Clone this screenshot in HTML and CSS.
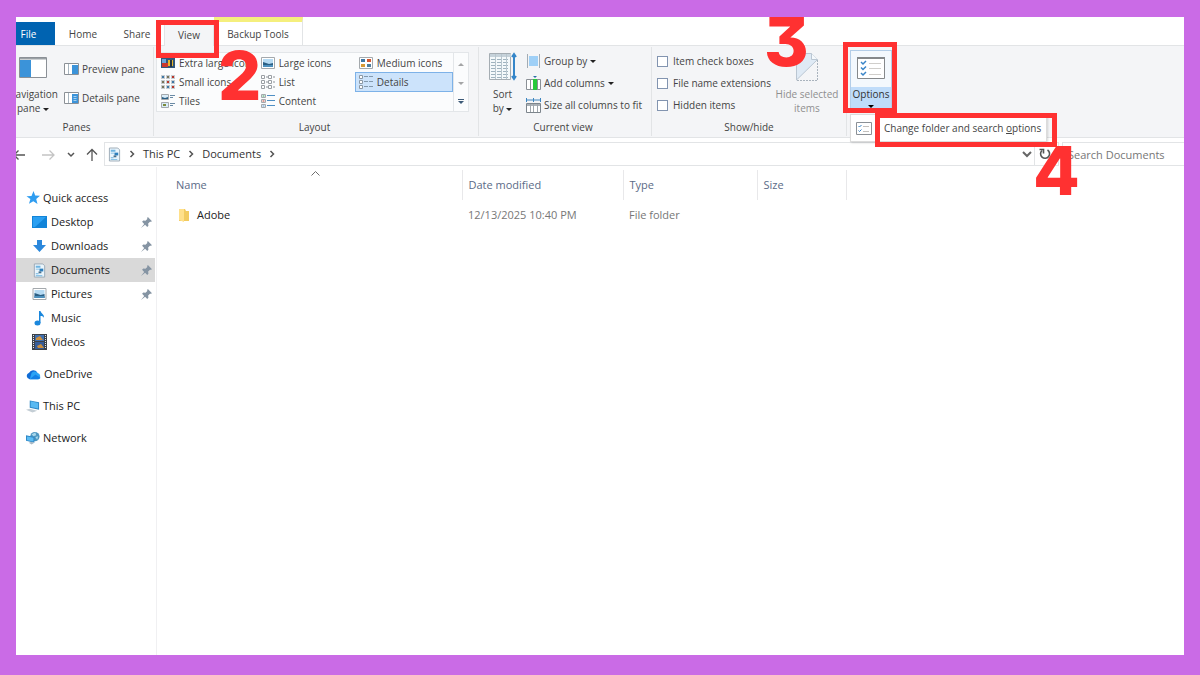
FILE: index.html
```html
<!DOCTYPE html>
<html lang="en">
  <head>
    <meta charset="UTF-8" />
    <meta name="viewport" content="width=device-width, initial-scale=1.0" />
    <title>Documents</title>
    <link rel="stylesheet" href="styles.css">
  </head>
  <body>
    <!-- Shared icons -->
    <svg class="sprite" aria-hidden="true">
      <symbol id="i-doc" viewBox="0 0 14 16">
        <path d="M1.500 1h9l2 2v12h-11z" fill="#eaf5fc" stroke="#9aa9b4" />
        <path d="M3 3h5v2H3zM3 6h4v1H3zM3 11h3v1H3zM3 13h7v1H3z" fill="#6fb4e0" />
        <path d="M7 6h4v3H7z" fill="#2d7fbd" />
        <path d="M6 9h3v2H6z" fill="#4b6f8a" />
      </symbol>
      <symbol id="i-pin" viewBox="0 0 12 12">
        <path d="M7.500 0L12 4.500l-1.200.8-1-.2-2 2 .3 2.400L6.800 10.800 4.500 8.500 0 12l3.500-4.500L1.200 5.200l1.300-1.300 2.400.3 2-2-.2-1z" fill="#8594a3" />
      </symbol>
      <symbol id="i-photo" viewBox="0 0 14 12">
        <path d="M.5.500h13v11H.500z" fill="#fff" stroke="#a4a9ad" />
        <path d="M2 2h10v8H2z" fill="#b5daf3" />
        <path d="M2 5l3 1 3 1 4-1v4H2z" fill="#2b5f84" />
        <path d="M2 8h10v2H2z" fill="#4d90bd" />
      </symbol>
      <symbol id="i-chev" viewBox="0 0 8 8">
        <path d="M2.500 1l3 3-3 3" fill="none" stroke="#555" stroke-width="1.500" />
      </symbol>
    </svg>

    <div class="window">
      <div class="title-strip"></div>

      <nav class="tabs">
        <button class="tab file">File</button>
        <button class="tab">Home</button>
        <button class="tab">Share</button>
        <div class="tab-wrap">
          <button class="tab active">View</button>
          <span class="mark mark-view"></span>
          <span class="step step-2">2</span>
        </div>
        <button class="tab backup">Backup Tools</button>
      </nav>

      <div class="ribbon">
        <section class="group panes">
          <div class="group-body">
            <button class="big">
              <svg width="28" height="21" viewBox="0 0 28 21">
                <path d="M.5.500h27v20H.500z" fill="#fff" stroke="#8b9096" />
                <path d="M1 1h26v1.500H1z" fill="#9aa0a5" />
                <path d="M1 3h11v17H1z" fill="#3b93d9" />
              </svg>
              <span>Navigation</span>
              <span>pane <i class="caret"></i></span>
            </button>
            <div class="stack roomy">
              <button class="cmd">
                <svg width="15" height="12" viewBox="0 0 15 12">
                  <path d="M.5.500h14v11H.500z" fill="#fff" stroke="#8b9096" />
                  <path d="M4.500 1v10" stroke="#a9b6c0" />
                  <path d="M8 2h6v9H8z" fill="#3b93d9" />
                </svg>
                Preview pane
              </button>
              <button class="cmd">
                <svg width="15" height="12" viewBox="0 0 15 12">
                  <path d="M.5.500h14v11H.500z" fill="#fff" stroke="#8b9096" />
                  <path d="M4.500 1v10" stroke="#a9b6c0" />
                  <path d="M8 2h6v9H8z" fill="#3b93d9" />
                  <path d="M9.500 4.500h3M9.500 6.500h3M9.500 8.500h3" stroke="#a8d0ef" />
                </svg>
                Details pane
              </button>
            </div>
          </div>
          <h2>Panes</h2>
        </section>

        <section class="group layout">
          <div class="group-body">
            <div class="gallery">
              <div class="views">
                <button class="view">
                  <svg width="14" height="12" viewBox="0 0 14 12">
                    <path d="M0 1h14v10H0z" fill="#31567a" />
                    <path d="M1 2h4v4H1z" fill="#6ca6d8" />
                    <path d="M1 6h6v4H1z" fill="#c9372c" />
                    <path d="M7 3h5v6H7z" fill="#e8b62d" />
                    <path d="M9 3h2v7H9z" fill="#27343e" />
                  </svg>
                  Extra large icons
                </button>
                <button class="view">
                  <svg width="14" height="12"><use href="#i-photo" /></svg>
                  Large icons
                </button>
                <button class="view">
                  <svg width="14" height="12" viewBox="0 0 14 12">
                    <path d="M.5.500h13v11H.500z" fill="#fff" stroke="#a4a9ad" />
                    <path d="M2 2h4v3H2z" fill="#3f78a5" />
                    <path d="M8 2h4v3H8z" fill="#d4562f" />
                    <path d="M2 7h4v3H2z" fill="#d89a35" />
                    <path d="M8 7h4v3H8z" fill="#4f7f9f" />
                  </svg>
                  Medium icons
                </button>
                <button class="view">
                  <svg width="14" height="14" viewBox="0 0 14 14">
                    <path d="M0 0h4v4H0zM5 0h4v4H5zM10 0h4v4h-4zM0 5h4v4H0zM5 5h4v4H5zM10 5h4v4h-4zM0 10h4v4H0zM5 10h4v4H5zM10 10h4v4h-4z" fill="#c7cdd2" />
                    <path d="M1 1h2v2H1zM11 6h2v2h-2zM6 11h2v2H6z" fill="#3f78a5" />
                    <path d="M11 1h2v2h-2zM6 6h2v2H6zM11 11h2v2h-2z" fill="#b8382c" />
                    <path d="M6 1h2v2H6zM1 6h2v2H1zM1 11h2v2H1z" fill="#77745c" />
                  </svg>
                  Small icons
                </button>
                <button class="view">
                  <svg width="14" height="14" viewBox="0 0 14 14">
                    <path d="M.5.500h3v3h-3zM.5 5.500h3v3h-3zM.5 10.500h3v3h-3zM7.500.500h3v3h-3zM7.500 5.500h3v3h-3zM7.500 10.500h3v3h-3z" fill="#fff" stroke="#9a9fa4" />
                    <path d="M5 2h2M5 7h2M5 12h2M12 2h2M12 7h2M12 12h2" stroke="#8b9096" />
                  </svg>
                  List
                </button>
                <button class="view selected">
                  <svg width="14" height="14" viewBox="0 0 14 14">
                    <path d="M.5.500h3v3h-3zM.5 5.500h3v3h-3zM.5 10.500h3v3h-3z" fill="#fff" stroke="#8b98a5" />
                    <path d="M5 1.500h4M5 6.500h4M5 11.500h4M10 1.500h4M10 6.500h4M10 11.500h4" stroke="#8299ad" />
                  </svg>
                  Details
                </button>
                <button class="view">
                  <svg width="14" height="14" viewBox="0 0 14 14">
                    <path d="M.5.500h7v5h-7zM.5 8.500h7v5h-7z" fill="#d9ecf8" stroke="#a4a9ad" />
                    <path d="M1 3l3 1 3-1v2H1z" fill="#2b5f84" />
                    <path d="M2 10h3v2H2z" fill="#7c8a3a" />
                    <path d="M9 1.500h5M9 3.500h3M9 9.500h5M9 11.500h3" stroke="#6a8aa5" />
                  </svg>
                  Tiles
                </button>
                <button class="view">
                  <svg width="14" height="14" viewBox="0 0 14 14">
                    <path d="M.5.500h4v3h-4zM.5 5.500h4v3h-4zM.5 10.500h4v3h-4z" fill="#fff" stroke="#a4a9ad" />
                    <path d="M1.500 2h2" stroke="#2f9658" />
                    <path d="M1.500 7h2" stroke="#b8382c" />
                    <path d="M1.500 12h2M6 1.500h8M6 6.500h8M6 11.500h8" stroke="#4f8fc4" />
                  </svg>
                  Content
                </button>
              </div>
              <div class="scroller">
                <button aria-label="Scroll up"><i class="caret up faint"></i></button>
                <button aria-label="Scroll down"><i class="caret faint"></i></button>
                <button aria-label="More"><i class="caret more"></i></button>
              </div>
            </div>
          </div>
          <h2>Layout</h2>
        </section>

        <section class="group current">
          <div class="group-body">
            <button class="big sort">
              <svg width="28" height="30" viewBox="0 0 28 30">
                <path d="M.5 1.500h21v26H.500z" fill="#f4f9fb" stroke="#a5adb3" />
                <path d="M1 2h21v3H1z" fill="#c6d2da" />
                <path d="M2 7.500h18M2 10.500h18M2 13.500h18M2 16.500h18M2 19.500h18M2 22.500h18M2 25.500h18" stroke="#9fb3bf" stroke-dasharray="5 1" />
                <path d="M6.500 2v25M12.500 2v25M17.500 2v25" stroke="#b8c6ce" />
                <path d="M25 2v25M23 5l2-3 2 3M23 24l2 3 2-3" fill="none" stroke="#3586c9" stroke-width="2" />
              </svg>
              <span>Sort</span>
              <span>by <i class="caret"></i></span>
            </button>
            <div class="stack">
              <button class="cmd">
                <svg width="15" height="14" viewBox="0 0 15 14">
                  <path d="M3 2h9v10H3z" fill="#9fd0f7" />
                  <path d="M1.500 0v14M13.500 0v14" stroke="#a3acb4" />
                </svg>
                Group by <i class="caret"></i>
              </button>
              <button class="cmd">
                <svg width="15" height="14" viewBox="0 0 15 14">
                  <path d="M.5 3.500h14v10H.500z" fill="#fff" stroke="#8b9096" />
                  <path d="M4.500 4v9M11.500 4v9" stroke="#8b9096" />
                  <path d="M7 3h4v11H7z" fill="#27c93a" />
                  <path d="M7 0h4L9 2z" fill="#2d6fa5" />
                </svg>
                Add columns <i class="caret"></i>
              </button>
              <button class="cmd">
                <svg width="15" height="15" viewBox="0 0 15 15">
                  <path d="M.5 0v4M14.500 0v4M7.500 0v4M1 2h13" stroke="#3e86c0" />
                  <path d="M.5 5.500h14v9H.500z" fill="#fff" stroke="#7d858c" />
                  <path d="M1 6h13v2H1z" fill="#aab1b7" />
                  <path d="M4.500 6v8M7.500 6v8M11.500 6v8" stroke="#a0a7ad" />
                </svg>
                Size all columns to fit
              </button>
            </div>
          </div>
          <h2>Current view</h2>
        </section>

        <section class="group showhide">
          <div class="group-body">
            <div class="stack">
              <label class="check"><input type="checkbox" /> Item check boxes</label>
              <label class="check"><input type="checkbox" /> File name extensions</label>
              <label class="check"><input type="checkbox" /> Hidden items</label>
            </div>
            <button class="big hide" disabled>
              <svg width="22" height="30" viewBox="0 0 22 30">
                <path d="M.5 28V1.500h15l6 6z" fill="#dfeaf5" stroke="#bac6d2" />
                <path d="M15.500 1.500v6h6" fill="#f5f9fc" stroke="#bac6d2" />
                <path d="M21.500 8v20.500H1" fill="none" stroke="#a9b3bd" stroke-dasharray="2 1" />
              </svg>
              <span>Hide selected</span>
              <span>items</span>
            </button>
            <span class="step step-3">3</span>
          </div>
          <h2>Show/hide</h2>
        </section>

        <section class="options-group">
          <button class="options">
            <span class="options-icon">
              <svg width="28" height="22" viewBox="0 0 28 22">
                <path d="M.5.500h27v21H.500z" fill="#fff" stroke="#85888b" />
                <path d="M0 0h28v2H0z" fill="#85888b" />
                <path d="M4 5l2 2 3-3M4 10.500l2 2 3-3M4 16l2 2 3-3" fill="none" stroke="#3a85c8" stroke-width="1.500" />
                <path d="M12 6.500h12M12 11.500h12M12 17.500h12" stroke="#d0cecb" />
              </svg>
            </span>
            <span class="options-label">Options<i class="caret"></i></span>
          </button>
          <div class="menu">
            <a href="#options">
              <svg width="16" height="13" viewBox="0 0 16 13">
                <path d="M.5.500h15v12H.500z" fill="#fff" stroke="#8b9096" />
                <path d="M2.500 4l1 1 2-2M2.500 8.500l1 1 2-2" fill="none" stroke="#3a85c8" />
                <path d="M7 4.500h6M7 9.500h6" stroke="#c3c0bd" />
              </svg>
              <span>Change folder and search <u>o</u>ptions</span>
            </a>
            <span class="mark mark-menu"></span>
            <span class="step step-4">4</span>
          </div>
          <span class="mark mark-options"></span>
        </section>
      </div>

      <div class="address-row">
        <div class="history">
          <button aria-label="Back">
            <svg width="13" height="12" viewBox="0 0 13 12"><path d="M13 6H2M6.500 1.500L2 6l4.500 4.500" fill="none" stroke="#555" stroke-width="1.300" /></svg>
          </button>
          <button aria-label="Forward">
            <svg width="13" height="12" viewBox="0 0 13 12"><path d="M0 6h12M7.500 1.500L12 6l-4.500 4.500" fill="none" stroke="#c4c4c4" stroke-width="1.300" /></svg>
          </button>
          <button aria-label="Recent locations">
            <svg width="8" height="6" viewBox="0 0 8 6"><path d="M1 1l3 3 3-3" fill="none" stroke="#555" stroke-width="1.500" /></svg>
          </button>
          <button aria-label="Up">
            <svg width="12" height="13" viewBox="0 0 12 13"><path d="M6 13V1.500M1 6.500l5-5 5 5" fill="none" stroke="#555" stroke-width="1.300" /></svg>
          </button>
        </div>
        <div class="address">
          <svg width="13" height="15"><use href="#i-doc" /></svg>
          <svg width="8" height="8"><use href="#i-chev" /></svg>
          <a href="#pc">This PC</a>
          <svg width="8" height="8"><use href="#i-chev" /></svg>
          <a href="#documents">Documents</a>
          <svg width="8" height="8"><use href="#i-chev" /></svg>
          <button class="drop" aria-label="Previous locations">
            <svg width="10" height="7" viewBox="0 0 10 7"><path d="M1 1l4 4 4-4" fill="none" stroke="#666" stroke-width="2" /></svg>
          </button>
          <button class="refresh" aria-label="Refresh">
            <svg width="12" height="12" viewBox="0 0 12 12">
              <path d="M8.500 2A4.500 4.500 0 1 1 3 2.500" fill="none" stroke="#555" stroke-width="1.600" />
              <path d="M.5 1.500H4.500V5.500" fill="none" stroke="#555" stroke-width="1.600" />
            </svg>
          </button>
        </div>
        <input class="search" type="text" placeholder="Search Documents" aria-label="Search Documents" />
      </div>

      <div class="content">
        <nav class="sidebar">
          <a class="root" href="#quick">
            <svg width="14" height="14" viewBox="0 0 14 14"><path d="M7.500 0l1.700 4.600 4.800.200-3.800 3.100L11.500 13 7.300 10.200 3 12.800l1.400-4.900L.5 5.200l5-.300z" fill="#2f9df0" /></svg>
            Quick access
          </a>
          <a href="#desktop">
            <svg width="15" height="12" viewBox="0 0 15 12"><path d="M0 0h15v12H0z" fill="#1284d8" /><path d="M1 1h13L3 11H1z" fill="#2ba0f2" /></svg>
            Desktop
            <svg class="pin" width="11" height="11"><use href="#i-pin" /></svg>
          </a>
          <a href="#downloads">
            <svg width="15" height="14" viewBox="0 0 15 14"><path d="M5 1h5v5h4l-6.500 7L1 6h4z" fill="#2b88dc" /></svg>
            Downloads
            <svg class="pin" width="11" height="11"><use href="#i-pin" /></svg>
          </a>
          <a class="current-folder" href="#documents">
            <svg width="15" height="15"><use href="#i-doc" /></svg>
            Documents
            <svg class="pin" width="11" height="11"><use href="#i-pin" /></svg>
          </a>
          <a href="#pictures">
            <svg width="15" height="12"><use href="#i-photo" /></svg>
            Pictures
            <svg class="pin" width="11" height="11"><use href="#i-pin" /></svg>
          </a>
          <a href="#music">
            <svg width="15" height="15" viewBox="0 0 15 15">
              <path d="M7 0h1.500c.3 2.500 4 3 3.500 7-.5-1.500-1.500-2-3.500-2v7H7z" fill="#1b87dc" />
              <ellipse cx="5.500" cy="12" rx="3" ry="2.500" fill="#1b87dc" />
            </svg>
            Music
          </a>
          <a href="#videos">
            <svg width="15" height="16" viewBox="0 0 15 16">
              <path d="M0 0h15v16H0z" fill="#3c4248" />
              <path d="M3 1h9v6H3z" fill="#3f6fb0" />
              <path d="M3 8h9v7H3z" fill="#355c99" />
              <path d="M4 4l4-2 3 4H4zM5 12l4-2 3 4H6z" fill="#cc8f3c" />
              <path d="M1.500 1v14M13.500 1v14" stroke="#e4e8eb" stroke-dasharray="1 1" />
            </svg>
            Videos
          </a>
          <a class="root spaced" href="#onedrive">
            <svg width="15" height="11" viewBox="0 0 16 11">
              <path d="M4 10.500a3.600 3.600 0 0 1-.7-7A5.200 5.200 0 0 1 12 3l-2 5z" fill="#0f6cd6" />
              <path d="M6 3.500A4.500 4.500 0 0 1 12.500 4 3.400 3.400 0 0 1 13 10.500H4z" fill="#2aa3f5" />
              <path d="M4 10.500l6-5 5.500 3.500a2.500 2.500 0 0 1-2.500 1.500z" fill="#1380e6" />
            </svg>
            OneDrive
          </a>
          <a class="root spaced" href="#pc">
            <svg width="14" height="14" viewBox="0 0 15 14">
              <path d="M4 1l10 2v8L4 9z" fill="#2d86c4" />
              <path d="M5 2l8 1.700v6L5 8z" fill="#58b9f2" />
              <path d="M0 11l4-1 8 2-5 2z" fill="#c4ced5" />
            </svg>
            This PC
          </a>
          <a class="root spaced" href="#network">
            <svg width="14" height="14" viewBox="0 0 15 14">
              <circle cx="9.500" cy="5.500" r="5" fill="#4d96c0" />
              <path d="M6 3l4-2 1 3-3 1zM10 6l3-1-1 4z" fill="#a8d7eb" />
              <path d="M0 4l9 2v6L0 10z" fill="#2d86c4" />
              <path d="M1 5.300l7 1.500v4L1 9.300z" fill="#5cbcf3" />
              <path d="M3 12l3-1 3 1-3 2z" fill="#a9b9c5" />
            </svg>
            Network
          </a>
        </nav>

        <main class="files">
          <svg class="sort-arrow" width="9" height="5" viewBox="0 0 9 5"><path d="M.5 4.500l4-4 4 4" fill="none" stroke="#6d6d6d" /></svg>
          <table>
            <thead>
              <tr>
                <th class="name">Name</th>
                <th class="date">Date modified</th>
                <th class="type">Type</th>
                <th class="size">Size</th>
                <td></td>
              </tr>
            </thead>
            <tbody>
              <tr>
                <td class="name">
                  <a href="#adobe">
                    <svg width="10" height="13" viewBox="0 0 10 13">
                      <path d="M0 0h6l1 2h3v10H0z" fill="#f2cb60" />
                      <path d="M0 0h5v13L0 11z" fill="#ffe08a" />
                    </svg>
                    Adobe
                  </a>
                </td>
                <td>12/13/2025 10:40 PM</td>
                <td>File folder</td>
                <td></td>
                <td></td>
              </tr>
            </tbody>
          </table>
        </main>
      </div>
    </div>
  </body>
</html>
```
FILE: styles.css
```css
:root {
  --frame: #ca6be6;
  --ribbon: #f4f5f7;
  --line: #e2e4e6;
  --text: #444;
  --mark: #ff3131;
}

* {
  box-sizing: border-box;
}

body {
  margin: 0;
  min-height: 100vh;
  padding: 17px 16px 20px;
  display: flex;
  background: var(--frame);
  color: var(--text);
  font-family: "Open Sans", "Noto Sans", sans-serif;
  font-size: 11px;
  line-height: 14px;
}

button,
input {
  font: inherit;
  color: inherit;
}

button {
  margin: 0;
  padding: 0;
  border: 0;
  background: none;
  white-space: nowrap;
}

a {
  color: inherit;
  text-decoration: none;
}

svg {
  display: block;
  flex: none;
}

.sprite {
  position: absolute;
  width: 0;
  height: 0;
}

.window {
  flex: 1;
  min-width: 0;
  display: flex;
  flex-direction: column;
  background: #fff;
  overflow: hidden;
}

.title-strip {
  height: 5px;
}

/* Tabs */
.tabs {
  display: flex;
  height: 23px;
  font-size: 10px;
}

.tab {
  width: 54px;
  height: 23px;
}

.tab.file {
  width: 39px;
  margin-right: 1px;
  padding-right: 14px;
  background: #0063b1;
  color: #fff;
}

.tab-wrap {
  position: relative;
  z-index: 3;
}

.tab.active {
  width: 50px;
  height: 24px;
  background: var(--ribbon);
  border: 1px solid var(--line);
  border-bottom: 0;
}

.tab.backup {
  width: 89px;
  height: 28px;
  margin-top: -5px;
  border-top: 5px solid #f5ef7d;
  border-right: 1px solid var(--line);
}

/* Ribbon */
.ribbon {
  display: flex;
  height: 93px;
  margin-left: -16px;
  padding: 1px 0;
  background: var(--ribbon);
  border-top: 1px solid var(--line);
  border-bottom: 1px solid var(--line);
}

.group {
  display: flex;
  flex-direction: column;
  border-right: 1px solid var(--line);
}

.group-body {
  position: relative;
  flex: 1;
  display: flex;
}

.group h2 {
  margin: 0;
  height: 18px;
  font-size: 10px;
  font-weight: 400;
  line-height: 18px;
  text-align: center;
}

.panes {
  width: 154px;
  padding-left: 8px;
  padding-right: 8px;
}

.layout {
  width: 325px;
  padding-right: 5px;
  padding-left: 2px;
}

.current {
  width: 173px;
  padding-right: 4px;
}

.showhide {
  width: 195px;
}

.big {
  display: flex;
  flex-direction: column;
  align-items: center;
  width: 50px;
  padding-top: 5px;
  font-size: 10px;
}

.big svg {
  margin-bottom: 5px;
}

.panes .big svg {
  margin-top: 5px;
  margin-bottom: 9px;
}

.sort {
  width: 47px;
}

.hide {
  width: 72px;
  color: #8f8f8f;
}

.stack {
  display: flex;
  flex-direction: column;
  padding-top: 3px;
}

.cmd,
.check {
  display: flex;
  align-items: center;
  gap: 3px;
  height: 22px;
  font-size: 10px;
}

.roomy {
  padding: 7px 0 0 6px;
}

.roomy .cmd {
  height: 29px;
}

.check {
  gap: 5px;
  padding-left: 5px;
}

.check input {
  appearance: none;
  width: 11px;
  height: 11px;
  margin: 0;
  background: #fff;
  border: 1px solid #8294b0;
}

.caret {
  display: inline-block;
  vertical-align: middle;
  border: 3px solid transparent;
  border-top-color: #222;
  border-bottom-width: 0;
}

.caret.up {
  border-top-width: 0;
  border-bottom: 3px solid #222;
}

.caret.faint {
  opacity: 0.4;
}

.caret.more {
  position: relative;
  border-top-color: #3d5a78;
}

.caret.more::before {
  content: "";
  position: absolute;
  top: -5px;
  left: -3px;
  width: 6px;
  height: 1px;
  background: #3d5a78;
}

.gallery {
  display: flex;
  width: 313px;
  height: 60px;
  margin-top: 5px;
  background: #fbfcfd;
  border: 1px solid #e3e6e9;
}

.views {
  flex: 1;
  display: grid;
  grid-template-columns: repeat(3, 1fr);
  grid-template-rows: repeat(3, 1fr);
}

.view {
  display: flex;
  align-items: center;
  gap: 4px;
  padding-left: 3px;
  font-size: 10px;
  border: 1px solid transparent;
}

.view.selected {
  background: #cce3fb;
  border-color: #7db2e8;
}

.scroller {
  width: 15px;
  display: grid;
  grid-template-rows: repeat(3, 1fr);
  border-left: 1px solid #e3e6e9;
  line-height: 1;
}

/* Options button and its menu */
.options-group {
  position: relative;
  z-index: 2;
  padding: 3px;
}

.options {
  display: flex;
  flex-direction: column;
  width: 42px;
  height: 60px;
  border: 1px solid #b3cde8;
  font-size: 10px;
}

.options-icon {
  display: flex;
  justify-content: center;
  width: 100%;
  height: 36px;
  padding-top: 6px;
  background: #f3f8fd;
}

.options-label {
  display: flex;
  flex-direction: column;
  align-items: center;
  width: 100%;
  flex: 1;
  background: #bfdcfa;
  color: #333;
}

.options-label .caret {
  margin-top: 4px;
  border-top-color: #000;
}

.menu {
  position: absolute;
  top: 67px;
  left: 3px;
  background: #fff;
  border: 1px solid #dcdcdc;
  box-shadow: 1px 1px 2px rgba(0, 0, 0, 0.15);
}

.menu a {
  display: flex;
  align-items: center;
  gap: 12px;
  width: 195px;
  height: 26px;
  padding-left: 5px;
  font-size: 10px;
  white-space: nowrap;
}

/* Red callouts */
.mark {
  position: absolute;
  border: 5px solid var(--mark);
  pointer-events: none;
}

.mark-view {
  top: -2px;
  left: -8px;
  width: 63px;
  height: 38px;
}

.mark-options {
  top: -5px;
  left: -4px;
  width: 54px;
  height: 71px;
}

.mark-menu {
  top: -2px;
  left: 24px;
  width: 182px;
  height: 34px;
}

.step {
  position: absolute;
  color: var(--mark);
  font-family: Inter, sans-serif;
  font-size: 68px;
  font-weight: 800;
  font-feature-settings: "cv09";
  line-height: 50px;
  pointer-events: none;
}

.step-2 {
  top: 28px;
  left: 54px;
}

.step-3 {
  top: -31px;
  left: 112px;
}

.step-4 {
  top: 30px;
  left: 182px;
}

/* Address bar */
.address-row {
  display: flex;
  height: 29px;
  padding-top: 4px;
}

.history {
  display: flex;
  align-items: center;
  gap: 14px;
  width: 89px;
  margin-left: -4px;
  margin-right: 3px;
}

.history button:nth-child(2) {
  margin-left: 3px;
}

.history button:nth-child(3) {
  margin-left: -2px;
}

.history button:nth-child(4) {
  margin-left: -3px;
}

.address {
  flex: 1;
  display: flex;
  align-items: center;
  gap: 7px;
  height: 24px;
  padding-left: 3px;
  border: 1px solid var(--line);
  color: #333;
}

.drop {
  margin-left: auto;
  margin-right: -5px;
}

.refresh {
  display: flex;
  align-items: center;
  height: 22px;
  padding: 0 7px 0 4px;
  border-left: 1px solid var(--line);
}

.search {
  width: 122px;
  height: 24px;
  margin-left: 3px;
  padding: 0 0 0 5px;
  border: 1px solid var(--line);
  border-right: 0;
  background: #fff;
}

.search::placeholder {
  color: #777;
  opacity: 1;
}

/* Folder tree */
.content {
  flex: 1;
  display: flex;
}

.sidebar {
  width: 141px;
  padding: 19px 1px 0 0;
  border-right: 1px solid #f0f0f2;
  color: #222;
}

.sidebar a {
  display: flex;
  align-items: center;
  gap: 4px;
  height: 24px;
  padding: 0 3px 0 16px;
}

.sidebar .root {
  gap: 3px;
  padding-left: 10px;
}

.sidebar .spaced {
  margin-top: 8px;
}

.sidebar .current-folder {
  background: #d9d9d9;
}

.sidebar .pin {
  margin-left: auto;
}

/* File list */
.files {
  position: relative;
  flex: 1;
  padding-top: 3px;
}

.sort-arrow {
  position: absolute;
  top: 4px;
  left: 154px;
}

table {
  width: 100%;
  table-layout: fixed;
  border-collapse: collapse;
}

th,
td {
  height: 30px;
  padding: 0 6px;
  text-align: left;
}

th {
  border-right: 1px solid #e8e8ea;
  color: #5b6b87;
  font-weight: 400;
}

td {
  color: #777;
}

th.name {
  width: 305px;
  padding-left: 19px;
}

th.date {
  width: 161px;
}

th.type {
  width: 134px;
}

th.size {
  width: 89px;
}

td.name a {
  display: flex;
  align-items: center;
  gap: 8px;
  padding-left: 16px;
  color: #222;
}
```
